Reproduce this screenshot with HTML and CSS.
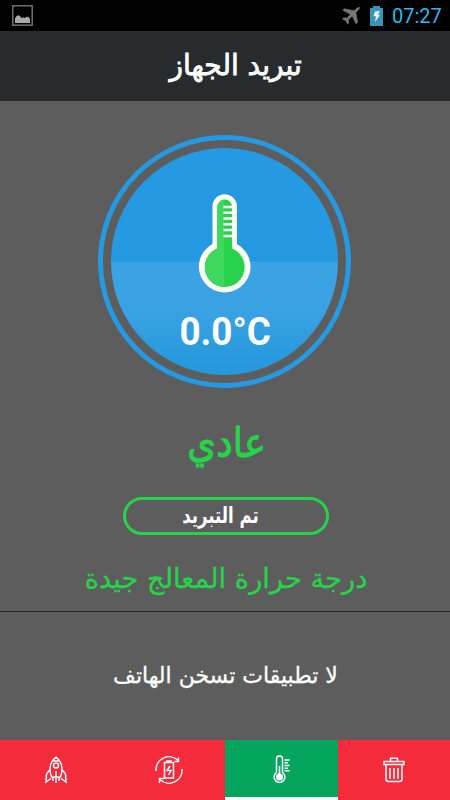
FILE: index.html
```html
<!DOCTYPE html>
<html lang="ar">
<head>
<meta charset="utf-8">
<title>تبريد الجهاز</title>
<link rel="stylesheet" href="styles.css">
</head>
<body>
<div class="status">
  <svg class="pic" width="21" height="21" viewBox="0 0 21 21"><rect x=".8" y=".8" width="19.4" height="19.4" fill="none" stroke="#777" stroke-width="1.4"/><path d="M3 18v-4.500Q6 7.500 9.500 13q2-1 3.500 0 2.500-3 5 1V18z" fill="#aaa"/></svg>
  <svg class="plane" width="19" height="18" viewBox="0 0 19 18"><path d="M17.500.3c-1.300-.3-3 1-5.300 3.500L2.500 1.800.8 3.300 8.500 7.300 5 11.200 1.600 10.800.5 12l3.300 1.700L5.500 17l1.200-1.100L6.400 12.500 10.300 9l3.600 7.700 1.700-1.500-1.800-9.800C16.500 3 18 1.500 17.500.3z" fill="#777" stroke="#777" stroke-width=".6"/></svg>
  <svg class="batt" width="13" height="20" viewBox="0 0 13 20"><path d="M3 0h7v2h3v18H0V2h3z" fill="#3a94b8"/><path d="M5 5.500l5-.8-2 4 2 .3-5 7 1-5.500-2.500-.5z" fill="#e6f3f8"/></svg>
  <span class="clock">07:27</span>
</div>
<header class="bar"><h1 class="txt title" dir="rtl">تبريد الجهاز</h1></header>
<main class="main">
  <div class="dial">
    <div class="disc">
      <svg class="thermo" width="54" height="102" viewBox="0 0 54 102">
        <path d="M14.500 13.500a12.200 12.200 0 0 1 24.400 0V51a25.800 25.800 0 1 1-24.400 0z" fill="#fff"/>
        <path d="M19.300 14a7.400 7.400 0 0 1 14.800 0V55.500a20 20 0 1 1-14.800 0z" fill="#27d34a"/>
        <path d="M26.200 6.800a7 7 0 0 0-6.900 7.200V55.500a20 20 0 0 0 6.900 38.500z" fill="#3fd85f"/>
        <path d="M25.500 14h9M25.500 19.800h9M25.500 25.500h9M25.500 31.300h9M25.500 37h9M25.500 43h9" stroke="#fff" stroke-width="2.400"/>
      </svg>
      <div class="temp">0.0°C</div>
    </div>
  </div>
  <p class="txt state" dir="rtl">عادي</p>
  <button class="done"><span class="txt donetext" dir="rtl">تم التبريد</span></button>
  <p class="txt info" dir="rtl">درجة حرارة المعالج جيدة</p>
</main>
<section class="apps"><p class="txt none" dir="rtl">لا تطبيقات تسخن الهاتف</p></section>
<nav class="tabs">
  <a class="tab"><svg width="22" height="28" viewBox="0 0 22 28"><path d="M6.500 21C4 14 4.500 6 11 1.200 17.500 6 18 14 15.500 21zM7.500 5h7M5 13.500L1.500 18 1 26l5-3.500M17 13.500l3.500 4.500.5 8-5-3.500M11 15v12M8 21.500V25M14 21.500V25"/><circle cx="11" cy="9.500" r="2.500"/></svg></a>
  <a class="tab"><svg width="28" height="28" viewBox="0 0 28 28"><path d="M1 15A13 13 0 0 1 23 4.500M23.500 1.500v4H19.500M27 13A13 13 0 0 1 5 23.500M4.500 27v-4.500H9M9.500 6.500h9v15.500h-9zM12 6V5h4V6M15 10l-3 4.500h4L13.500 19"/></svg></a>
  <a class="tab active"><svg width="18" height="28" viewBox="0 0 18 28"><path d="M4.500 17.500V4a3 3 0 0 1 6 0v13.500a5.400 5.400 0 1 1-6 0zM7.500 11v9M12.500 5H17.500M12.500 7.800H16M12.500 10.500H17.500M12.500 13.200H16M12.500 15.800H17.500"/><circle cx="7.500" cy="22" r="2.800" fill="#fff"/></svg></a>
  <a class="tab"><svg width="22" height="26" viewBox="0 0 22 26"><path d="M1 7.500V4.500h20V7.500zM7.500 4V1.200h7V4M3 7.500V22q0 2.500 2.500 2.500h11Q19 24.500 19 22V7.500M7 11v11M11 11v11M15 11v11"/></svg></a>
</nav>
</body>
</html>
```
FILE: styles.css
```css
* { box-sizing: border-box; margin: 0; padding: 0; }
body { width: 450px; height: 800px; overflow: hidden; background: #5d5d5d; font-family: Roboto, "DejaVu Sans", sans-serif; display: flex; flex-direction: column; }
svg { display: block; flex: none; }
.status { height: 31px; background: #000; display: flex; align-items: center; padding: 0 8px 0 12px; }
.plane { margin-left: auto; }
.batt { margin-left: 9px; }
.clock { margin-left: 9px; width: 50px; font-size: 20px; line-height: 31px; color: #33b5e5; padding-top: 2px; }
.txt { font-family: "DejaVu Sans", sans-serif; font-weight: 400; white-space: nowrap; }
.bar { height: 70px; background: #272b2e; display: flex; justify-content: center; align-items: center; padding: 0 0 2px 21px; }
.title { color: #fff; font-size: 29px; transform: scaleX(.965); -webkit-text-stroke: .8px #fff; }
.main { height: 510px; display: flex; flex-direction: column; align-items: center; padding-top: 34px; }
.dial { width: 253px; height: 253px; border: 5px solid #2599e1; border-radius: 50%; padding: 8px; flex: none; margin-right: 1px; }
.disc { width: 227px; height: 227px; border-radius: 50%; background: linear-gradient(#2599e1 0 50%, #3ba3e4 50%, #39a2e3 72%, #2599dc 96%); display: flex; flex-direction: column; align-items: center; padding-top: 45px; }
.temp { color: #fff; font-size: 38px; font-weight: 700; line-height: 44px; margin: 15px 0 0 2px; transform: scaleX(.97); }
.state { color: #27d34a; font-size: 41px; line-height: 50px; height: 50px; margin: 30px 0 4px 4px; transform: scaleX(.9); -webkit-text-stroke: 1px #27d34a; }
.done { width: 206px; height: 38px; border: 3px solid #27d34a; border-radius: 19px; background: none; color: #fff; margin: 25px 0 0 2px; display: flex; justify-content: center; align-items: center; padding-right: 12px; }
.donetext { font-size: 21px; font-weight: 700; transform: scale(.79, 1.06); }
.info { color: #27d34a; font-size: 27.300px; line-height: 40px; margin: 24px 0 0 2px; -webkit-text-stroke: .3px #27d34a; }
.apps { height: 129px; border-top: 1px solid #262626; display: flex; justify-content: center; align-items: center; }
.none { color: #fff; font-size: 22px; margin: 0 0 1px 1px; -webkit-text-stroke: .3px #fff; }
.tabs { height: 60px; display: grid; grid-template-columns: repeat(4, 1fr); }
.tab { background: #f32b3a; display: flex; justify-content: center; align-items: center; }
.tab svg { fill: none; stroke: #fff; stroke-width: 1.5; }
.active { background: #05a55e; border-bottom: 3px solid #fff; }
```
